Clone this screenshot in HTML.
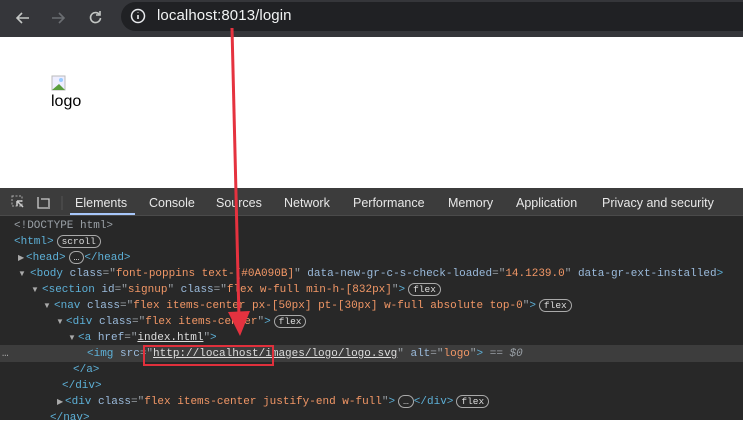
<!DOCTYPE html>
<html><head><style>
*{margin:0;padding:0;box-sizing:border-box}
body{width:743px;height:420px;overflow:hidden;background:#fff;position:relative;font-family:"Liberation Sans",sans-serif}
.top{position:absolute;left:0;top:0;width:743px;height:37px;background:#35363a}
.pill{position:absolute;left:121px;top:2px;width:640px;height:29px;border-radius:15px;background:#202124}
.url{position:absolute;left:157px;top:7px;color:#f1f3f4;font-size:15px;letter-spacing:0.1px}
.dt{position:absolute;left:0;top:188px;width:743px;height:232px;background:#282828}
.tabs{position:absolute;left:0;top:188px;width:743px;height:28px;background:#3c3c3c;border-bottom:1px solid #4a4a4a}
.tab{position:absolute;top:196px;color:#e8e8e8;font-size:12.5px}
.ln{position:absolute;font-family:"Liberation Mono",monospace;font-size:11px;white-space:pre;color:#9aa0a6;line-height:14px}
.t{color:#5db0d7}.a{color:#9bbbdc}.v{color:#f29766}.p{color:#9aa0a6}.w{color:#ddd}
.b{display:inline-block;border:1px solid #aaa;border-radius:8px;padding:0 4px;font-size:9.5px;color:#ddd;line-height:11px;margin-left:3px}
.tri{position:absolute;color:#aaa;font-size:8px}
</style></head><body>
<div class="top"></div>
<svg style="position:absolute;left:14px;top:9px" width="100" height="18"><g stroke="#c4c7c5" stroke-width="1.6" fill="none"><path d="M15 9H3M8 4L3 9l5 5"/></g><g stroke="#6b6e72" stroke-width="1.6" fill="none"><path d="M38 9h12M45 4l5 5-5 5"/></g><g stroke="#c4c7c5" stroke-width="1.6" fill="none"><path d="M85 5a5 5 0 1 0 1.5 4"/><path d="M86 2v4h-4"/></g></svg>
<div class="pill"></div>
<svg style="position:absolute;left:129px;top:7px" width="18" height="18"><circle cx="9" cy="9" r="6.5" stroke="#e8eaed" stroke-width="1.5" fill="none"/><path d="M9 8v4M9 5.5v.5" stroke="#e8eaed" stroke-width="1.6"/></svg>
<div class="url">localhost:8013/login</div>
<svg style="position:absolute;left:51px;top:75px" width="16" height="16"><rect x="1" y="1" width="13" height="14" fill="#eef" stroke="#bbb"/><path d="M1 15L8 9l6 6z" fill="#5a9e3e"/><circle cx="10" cy="5" r="2" fill="#9cf"/></svg>
<div style="position:absolute;left:51px;top:93px;font-size:16px;color:#000">logo</div>
<div class="dt"></div>
<div class="tabs"></div>
<svg style="position:absolute;left:10px;top:194px" width="60" height="16"><rect x="2" y="2" width="10" height="10" fill="none" stroke="#aaa" stroke-dasharray="2 1.5"/><path d="M7 7l6 6M7 7v5M7 7h5" stroke="#ccc" stroke-width="1.5"/><path d="M28 3v11h12M31 5h8v8" stroke="#ccc" fill="none" stroke-width="1.3"/><path d="M52 2v14" stroke="#555"/></svg>
<div class="tab" style="left:75px">Elements</div>
<div style="position:absolute;left:70px;top:213px;width:65px;height:2px;background:#a8c7fa"></div>
<div class="tab" style="left:149px">Console</div>
<div class="tab" style="left:216px">Sources</div>
<div class="tab" style="left:284px">Network</div>
<div class="tab" style="left:353px">Performance</div>
<div class="tab" style="left:448px">Memory</div>
<div class="tab" style="left:516px">Application</div>
<div class="tab" style="left:602px">Privacy and security</div>
<div style="position:absolute;left:0;top:345px;width:743px;height:17px;background:#3d3d3d"></div>
<div class="ln" style="left:14px;top:219px"><span class="p">&lt;!DOCTYPE html&gt;</span></div>
<div class="ln" style="left:14px;top:235px"><span class="t">&lt;html&gt;</span><span class="b">scroll</span></div>
<div class="tri" style="left:18px;top:253px">▶</div>
<div class="ln" style="left:26px;top:251px"><span class="t">&lt;head&gt;</span><span class="b">…</span><span class="t">&lt;/head&gt;</span></div>
<div class="tri" style="left:18px;top:269px">▼</div>
<div class="ln" style="left:30px;top:267px"><span class="t">&lt;body </span><span class="a">class</span><span class="p">="</span><span class="v">font-poppins text-[#0A090B]</span><span class="p">" </span><span class="a">data-new-gr-c-s-check-loaded</span><span class="p">="</span><span class="v">14.1239.0</span><span class="p">" </span><span class="a">data-gr-ext-installed</span><span class="t">&gt;</span></div>
<div class="tri" style="left:31px;top:285px">▼</div>
<div class="ln" style="left:42px;top:283px"><span class="t">&lt;section </span><span class="a">id</span><span class="p">="</span><span class="v">signup</span><span class="p">" </span><span class="a">class</span><span class="p">="</span><span class="v">flex w-full min-h-[832px]</span><span class="p">"</span><span class="t">&gt;</span><span class="b">flex</span></div>
<div class="tri" style="left:43px;top:301px">▼</div>
<div class="ln" style="left:54px;top:299px"><span class="t">&lt;nav </span><span class="a">class</span><span class="p">="</span><span class="v">flex items-center px-[50px] pt-[30px] w-full absolute top-0</span><span class="p">"</span><span class="t">&gt;</span><span class="b">flex</span></div>
<div class="tri" style="left:56px;top:317px">▼</div>
<div class="ln" style="left:66px;top:315px"><span class="t">&lt;div </span><span class="a">class</span><span class="p">="</span><span class="v">flex items-center</span><span class="p">"</span><span class="t">&gt;</span><span class="b">flex</span></div>
<div class="tri" style="left:68px;top:333px">▼</div>
<div class="ln" style="left:78px;top:331px"><span class="t">&lt;a </span><span class="a">href</span><span class="p">="</span><span class="w" style="text-decoration:underline">index.html</span><span class="p">"</span><span class="t">&gt;</span></div>
<div class="ln" style="left:2px;top:347px;color:#aaa">…</div>
<div class="ln" style="left:87px;top:347px"><span class="t">&lt;img </span><span class="a">src</span><span class="p">="</span><span class="w" style="text-decoration:underline">http://localhost/images/logo/logo.svg</span><span class="p">" </span><span class="a">alt</span><span class="p">="</span><span class="v">logo</span><span class="p">"</span><span class="t">&gt;</span><span class="p"> == <i>$0</i></span></div>
<div class="ln" style="left:73px;top:363px"><span class="t">&lt;/a&gt;</span></div>
<div class="ln" style="left:62px;top:379px"><span class="t">&lt;/div&gt;</span></div>
<div class="tri" style="left:57px;top:397px">▶</div>
<div class="ln" style="left:65px;top:395px"><span class="t">&lt;div </span><span class="a">class</span><span class="p">="</span><span class="v">flex items-center justify-end w-full</span><span class="p">"</span><span class="t">&gt;</span><span class="b">…</span><span class="t">&lt;/div&gt;</span><span class="b">flex</span></div>
<div class="ln" style="left:50px;top:411px"><span class="t">&lt;/nav&gt;</span></div>
<div style="position:absolute;left:143px;top:345px;width:131px;height:21px;border:2px solid #e0303c"></div>
<svg style="position:absolute;left:0;top:0" width="743" height="420"><path d="M232 28L239 318" stroke="#e5323f" stroke-width="3"/><path d="M228 312L240 336L250 311z" fill="#e5323f"/></svg>
</body></html>
